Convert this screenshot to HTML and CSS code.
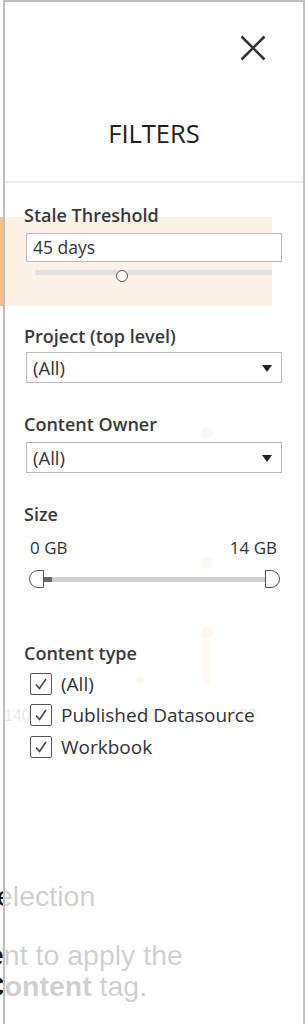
FILE: index.html
```html
<!DOCTYPE html>
<html>
  <head>
    <meta charset="UTF-8" />
    <title>Filters</title>
    <link rel="stylesheet" href="styles.css">
  </head>
  <body>
    <!-- page behind the filter panel -->
    <div class="page">
      <div class="chart">
        <div class="band"></div>
        <span class="dot" style="left: 201px; top: 427px"></span>
        <span class="dot" style="left: 201px; top: 557px"></span>
        <span class="dot" style="left: 201px; top: 627px"></span>
        <span class="bar" style="left: 203px; top: 640px; height: 44px"></span>
        <span class="dot small" style="left: 136px; top: 676px"></span>
        <span class="tick" style="left: 4px; top: 707px">140</span>
        <span class="tick" style="left: 129px; top: 707px">160</span>
        <span class="tick" style="left: 230px; top: 707px">180</span>
      </div>
      <div class="page-text">
        <p class="title-line">Selection</p>
        <p class="body-line first">ent to apply the</p>
        <p class="body-line last"><b>Content</b> tag.</p>
      </div>
    </div>

    <div class="panel">
      <div class="panel-header">
        <button class="close" aria-label="Close">
          <svg width="26" height="26" viewBox="0 0 26 26">
            <path d="M1.5 1.5 L24.5 24.5 M24.5 1.5 L1.5 24.5" stroke="#333" stroke-width="2.6" fill="none" />
          </svg>
        </button>
        <h1>FILTERS</h1>
      </div>

      <div class="filter stale">
        <div class="label">Stale Threshold</div>
        <div class="text-box">45 days</div>
        <div class="slider">
          <div class="track"></div>
          <div class="thumb"></div>
        </div>
      </div>

      <div class="filter project">
        <div class="label">Project (top level)</div>
        <div class="select">(All)<span class="arrow"></span></div>
      </div>

      <div class="filter owner">
        <div class="label">Content Owner</div>
        <div class="select">(All)<span class="arrow"></span></div>
      </div>

      <div class="filter size">
        <div class="label">Size</div>
        <div class="range-values"><span>0 GB</span><span>14 GB</span></div>
        <div class="range">
          <div class="handle left"></div>
          <div class="range-track"><div class="range-fill"></div></div>
          <div class="handle right"></div>
        </div>
      </div>

      <div class="filter type">
        <div class="label">Content type</div>
        <div class="check-row">
          <span class="checkbox"><svg width="14" height="14" viewBox="0 0 14 14"><path d="M2 7.5 L5.5 11.5 L12 2" stroke="#444" stroke-width="1.5" fill="none" /></svg></span>
          <span>(All)</span>
        </div>
        <div class="check-row">
          <span class="checkbox"><svg width="14" height="14" viewBox="0 0 14 14"><path d="M2 7.5 L5.5 11.5 L12 2" stroke="#444" stroke-width="1.5" fill="none" /></svg></span>
          <span>Published Datasource</span>
        </div>
        <div class="check-row">
          <span class="checkbox"><svg width="14" height="14" viewBox="0 0 14 14"><path d="M2 7.5 L5.5 11.5 L12 2" stroke="#444" stroke-width="1.5" fill="none" /></svg></span>
          <span>Workbook</span>
        </div>
      </div>
    </div>
  </body>
</html>
```

FILE: styles.css
```css
body {
  margin: 0;
  background: #fff;
  font-family: "Open Sans", "Noto Sans", sans-serif;
  color: #333;
  overflow: hidden;
}
.page {
  position: relative;
  height: 1024px;
}
.chart {
  position: relative;
  height: 860px;
}
.band {
  position: absolute;
  left: 0;
  top: 217px;
  width: 272px;
  height: 89px;
  background: #f5bf89;
}
.dot {
  position: absolute;
  width: 12px;
  height: 12px;
  border-radius: 50%;
  background: #f6b46c;
  opacity: 0.5;
}
.dot.small {
  width: 8px;
  height: 8px;
}
.bar {
  position: absolute;
  width: 8px;
  border-radius: 4px;
  background: #f6b46c;
  opacity: 0.5;
}
.tick {
  position: absolute;
  font-family: "Liberation Sans", Arial, sans-serif;
  font-size: 16px;
  color: #999;
}
.page-text {
  font-family: "Liberation Sans", Arial, sans-serif;
  font-size: 28.5px;
  color: #111;
}
.page-text p {
  margin: 0;
  white-space: nowrap;
}
.title-line {
  margin-left: -22px !important;
  margin-top: 21px !important;
  line-height: 31px;
}
.body-line {
  line-height: 31px;
}
.body-line.first {
  margin-top: 28px !important;
  margin-left: -12px !important;
}
.body-line.last {
  margin-left: -16px !important;
}

.panel {
  position: absolute;
  top: 0;
  left: 3px;
  width: 302px;
  height: 1040px;
  box-sizing: border-box;
  border: 2px solid #c0c0c0;
  border-bottom: none;
  background: rgba(255, 255, 255, 0.8);
  padding: 0 21px 0 19px;
}
.panel-header {
  position: relative;
  height: 179px;
  margin: 0 -21px 0 -19px;
  border-bottom: 2px solid #ececec;
}
.close {
  position: absolute;
  top: 33px;
  left: 235px;
  padding: 0;
  border: none;
  background: none;
  width: 26px;
  height: 26px;
}
.panel-header h1 {
  margin: 0;
  padding-top: 116px;
  text-align: center;
  font-size: 25.5px;
  font-weight: 400;
  line-height: 30px;
  color: #222;
}
.label {
  font-size: 18px;
  font-weight: 600;
  line-height: 22px;
  color: #3a3a3a;
}
.stale {
  margin-top: 21px;
}
.text-box {
  margin: 7px 0 0 2px;
  height: 29px;
  box-sizing: border-box;
  border: 1px solid #bbb;
  background: #fff;
  padding-left: 6px;
  font-size: 17.5px;
  line-height: 27px;
}
.slider {
  position: relative;
  height: 14px;
  margin: 8px 10px 0 11px;
}
.track {
  margin-top: 5px;
  height: 5px;
  background: #e2e2e2;
}
.thumb {
  position: absolute;
  left: 81px;
  top: 0;
  width: 10px;
  height: 10px;
  border: 1.5px solid #555;
  border-radius: 50%;
  background: #fff;
}
.project {
  margin-top: 41px;
}
.select {
  position: relative;
  margin: 5px 0 0 2px;
  height: 31px;
  box-sizing: border-box;
  border: 1px solid #bbb;
  background: #fff;
  padding-left: 6px;
  font-size: 18.5px;
  line-height: 29px;
}
.arrow {
  position: absolute;
  right: 9px;
  top: 12px;
  border-left: 5px solid transparent;
  border-right: 5px solid transparent;
  border-top: 7px solid #222;
}
.owner {
  margin-top: 30px;
}
.owner .select {
  margin-top: 7px;
}
.size {
  margin-top: 30px;
}
.range-values {
  display: flex;
  justify-content: space-between;
  margin: 13px 5px 0 6px;
  font-size: 17px;
  line-height: 20px;
}
.range {
  display: flex;
  align-items: center;
  margin: 12px 2px 0 5px;
  height: 18px;
}
.handle {
  width: 15px;
  height: 18px;
  box-sizing: border-box;
  border: 1.5px solid #555;
  background: #fff;
}
.handle.left {
  border-radius: 9px 0 0 9px;
}
.handle.right {
  border-radius: 0 9px 9px 0;
}
.range-track {
  flex: 1;
  height: 5px;
  background: #cfcfcf;
}
.range-fill {
  width: 8px;
  height: 5px;
  background: #666;
}
.type {
  margin-top: 54px;
}
.type .label {
  margin-bottom: 4px;
}
.check-row {
  display: flex;
  align-items: center;
  gap: 9px;
  height: 31.5px;
  margin-left: 6px;
  font-size: 19px;
}
.checkbox {
  display: flex;
  align-items: center;
  justify-content: center;
  width: 22px;
  height: 22px;
  box-sizing: border-box;
  border: 1.5px solid #555;
  border-radius: 2px;
  background: #fff;
}
```
